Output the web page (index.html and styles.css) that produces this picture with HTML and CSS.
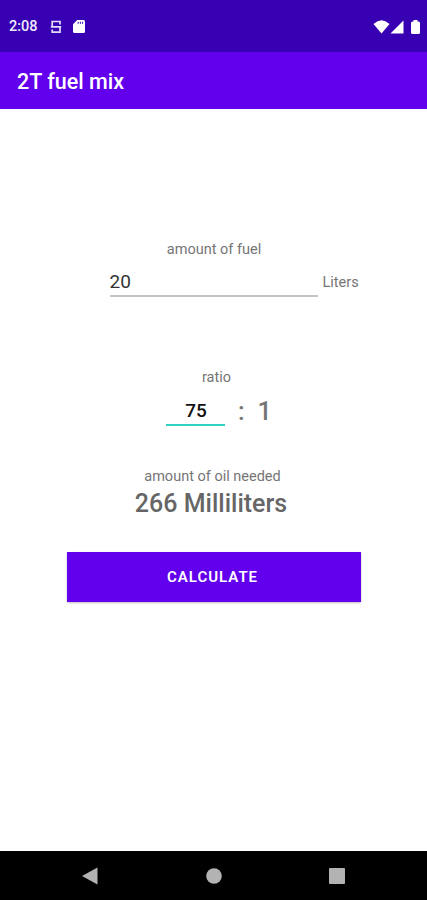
FILE: index.html
```html
<!DOCTYPE html>
<html lang="en">
<head>
    <meta charset="UTF-8">
    <meta name="viewport" content="width=device-width, initial-scale=1.0">
    <title>2T fuel mix</title>
    <link rel="stylesheet" href="styles.css">
</head>
<body>
    <div class="status-bar">
        <span class="time">2:08</span>
        <svg class="icon-s" width="12" height="14" viewBox="0 0 12 14" fill="none" stroke="#e4dcf8" stroke-width="1.7">
            <path d="M10 4.500V1.500H2.200V6.800H10V12.200H2.200V9.400M0.800 6.800H11.200"/>
        </svg>
        <svg class="icon-sd" width="12" height="13" viewBox="0 0 12 13">
            <path fill="#fff" d="M4.2 0H10.5Q12 0 12 1.5V11.5Q12 13 10.5 13H1.5Q0 13 0 11.5V4.2Z"/>
            <path stroke="#3700b3" stroke-width="1" d="M5.2 1.8V3.8M7.4 1.8V3.8M9.6 1.8V3.8"/>
        </svg>
        <div class="status-right">
            <svg width="17" height="14" viewBox="0 0 17 14">
                <path fill="#fff" d="M0.5 4Q8.5 -3.4 16.5 4L8.5 13.5Z"/>
            </svg>
            <svg width="14" height="14" viewBox="0 0 14 14">
                <path fill="#fff" d="M13.5 0.5V13.5H0.5Z"/>
            </svg>
            <svg class="battery" width="9" height="14" viewBox="0 0 9 14">
                <path fill="#fff" d="M2.5 0H6.5V1.500H7.5Q9 1.500 9 3V12.5Q9 14 7.5 14H1.5Q0 14 0 12.5V3Q0 1.5 1.5 1.5H2.5Z"/>
            </svg>
        </div>
    </div>
    <header class="toolbar">
        <h1>2T fuel mix</h1>
    </header>

    <main class="container">
        <label class="fuel-label" for="fuel">amount of fuel</label>
        <div class="fuel-row">
            <input type="text" id="fuel" value="20">
            <span class="unit">Liters</span>
        </div>
        <label class="ratio-label" for="ratio">ratio</label>
        <div class="ratio-row">
            <input type="text" id="ratio" value="75">
            <span class="colon">:</span>
            <span class="one">1</span>
        </div>
        <div class="oil-label">amount of oil needed</div>
        <div class="result" id="result">266 Milliliters</div>
        <button type="button" onclick="calculateOil()">CALCULATE</button>
    </main>

    <nav class="nav-bar">
        <svg width="16" height="18" viewBox="0 0 16 18"><path fill="#b3b3b3" d="M0 9L15.5 0.5V17.5Z"/></svg>
        <svg width="16" height="16" viewBox="0 0 16 16"><circle cx="8" cy="8" r="7.8" fill="#b3b3b3"/></svg>
        <svg width="16" height="16" viewBox="0 0 16 16"><rect width="16" height="16" rx="1" fill="#b3b3b3"/></svg>
    </nav>

    <script>
        function calculateOil() {
            const fuel = Number(document.getElementById("fuel").value);
            const ratio = Number(document.getElementById("ratio").value);
            // liters to milliliters
            const oil = Math.floor(fuel * 1000 / ratio);
            document.getElementById("result").innerText = oil + " Milliliters";
        }
    </script>
</body>
</html>
```
FILE: styles.css
```css
* {
    box-sizing: border-box;
}
body {
    font-family: Roboto, sans-serif;
    background-color: #fff;
    color: #757575;
    margin: 0;
    height: 900px;
    display: flex;
    flex-direction: column;
    overflow: hidden;
}
svg {
    display: block;
}
.status-bar {
    height: 52px;
    padding: 1px 7px 0 9px;
    background-color: #3700b3;
    color: #f0ebfb;
    display: flex;
    align-items: center;
}
.time {
    width: 41px;
    font-size: 14.5px;
    font-weight: 500;
}
.icon-sd {
    margin-left: 11px;
}
.status-right {
    margin-left: auto;
    display: flex;
    align-items: center;
}
.battery {
    margin-left: 7px;
}
.toolbar {
    height: 57px;
    padding-left: 17px;
    background-color: #6200ee;
    color: #fff;
    display: flex;
    align-items: center;
}
h1 {
    margin: 2px 0 0;
    font-size: 21.5px;
    font-weight: 500;
}
.container {
    flex: 1;
    display: flex;
    flex-direction: column;
    align-items: center;
    padding-top: 131px;
    font-size: 14.5px;
    line-height: 20px;
}
input {
    font-family: inherit;
    border: none;
    border-radius: 0;
    outline: none;
    padding: 0;
    background: none;
}
.fuel-label {
    margin-left: 1px;
}
.fuel-row {
    width: 249px;
    margin-left: 41px;
    display: flex;
    align-items: center;
    gap: 5px;
}
#fuel {
    width: 208px;
    height: 37px;
    padding-top: 7px;
    border-bottom: 2px solid #c4c4c4;
    font-size: 19px;
    color: #333;
}
.unit {
    padding-top: 9px;
}
.ratio-label {
    margin: 71px 0 0 6px;
}
.ratio-row {
    width: 105px;
    margin-left: 10px;
    height: 38px;
    display: flex;
    align-items: center;
    font-size: 25px;
    font-weight: 500;
}
#ratio {
    width: 59px;
    height: 38px;
    padding: 8px 0 0 1px;
    border-bottom: 2px solid #2fd3bf;
    font-size: 19px;
    font-weight: 500;
    text-align: center;
    color: #111;
}
.colon {
    margin: 0 13px;
}
.colon,
.one {
    padding-top: 9px;
}
.oil-label {
    margin-top: 41px;
    margin-left: -2px;
}
.result {
    margin: 2px 0 0 -5px;
    font-size: 25px;
    line-height: 30px;
    font-weight: 500;
    color: #666;
}
button {
    width: 294px;
    height: 50px;
    margin-top: 33px;
    padding: 0 2px 0 0;
    border: none;
    background-color: #6200ee;
    color: #fff;
    font-family: inherit;
    font-size: 15px;
    font-weight: 600;
    letter-spacing: 1px;
    box-shadow: 0 1px 2px rgba(0, 0, 0, 0.25);
}
.nav-bar {
    height: 49px;
    padding: 0 82px;
    background-color: #000;
    display: flex;
    align-items: center;
    justify-content: space-between;
}
```
